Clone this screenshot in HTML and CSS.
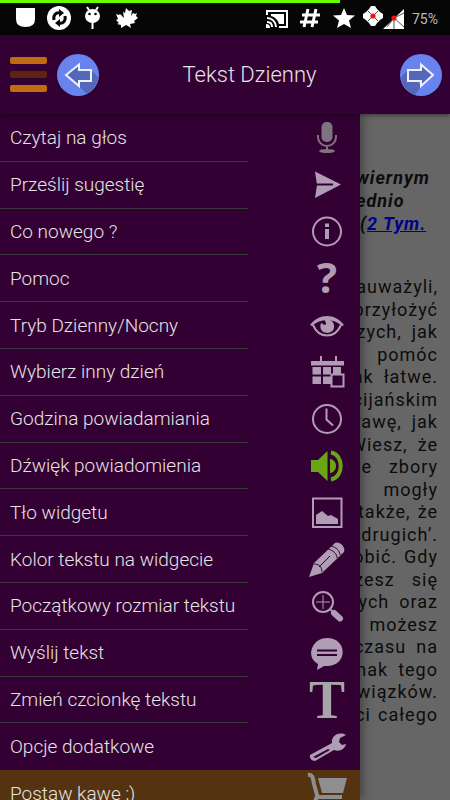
FILE: index.html
```html
<!DOCTYPE html>
<html lang="pl">
<head>
<meta charset="utf-8">
<meta name="viewport" content="width=device-width, initial-scale=1">
<title>Tekst Dzienny</title>
<link rel="stylesheet" href="styles.css">
</head>
<body>
<div class="app">
  <div class="status">
    <div class="battery-line"></div>
    <div class="status-group">
      <svg width="20" height="24" viewBox="0 0 20 24"><path d="M0 1h19v11q0 8-9.500 8T0 12z"/></svg>
      <svg width="24" height="24" viewBox="0 0 24 24"><circle cx="11" cy="11" r="12"/><path class="line-dark" d="M6 13c-1-5 2-8 6-7M17 9c1 5-2 8-6 7"/><path class="ink-dark" d="M11 2l5 4-5 4zM12 12l-5 4 5 4z"/></svg>
      <svg width="16" height="24" viewBox="0 0 16 24"><path class="line-white" d="M3 0l2 3M14 0l-2 3M8.500 15v7"/><ellipse cx="8.500" cy="9" rx="7.500" ry="7"/><circle class="ink-dark" cx="5.500" cy="7" r="1.300"/><circle class="ink-dark" cx="11.500" cy="7" r="1.300"/></svg>
      <svg width="28" height="24" viewBox="0 0 28 24"><path d="M14 1l3 3 3-1-1 6 2-3 2 1 2-1-1 3 2 2-4 3 1 2-5 1 1 4-3-2-2-1-5 3v-3l-4-1 2-1-3-3 2-1-2-5 3 1 1-1 4 4-1-6 2 1z"/></svg>
    </div>
    <div class="status-group status-right">
      <svg width="26" height="24" viewBox="0 0 26 24"><path class="line-white" d="M1 8V4h20v16h-8M1 11c5 0 9 4 9 9M1 15c3 0 5 2 5 5"/><path d="M5 7h13v10h-5c-1-4-4-7-8-8zM0 17q4 0 4 4H0z"/></svg>
      <svg width="24" height="24" viewBox="0 0 24 24"><path class="line-hash" d="M8 2L4 20M16 2l-4 18M2 8h18M0 15h18"/></svg>
      <svg width="22" height="24" viewBox="0 0 22 24"><path d="M12 1l3 7 8 .600-6 5 2 7.400-7-4-7 4 2-7.400-6-5L9 8z"/></svg>
      <svg width="42" height="24" viewBox="0 0 42 24"><path d="M9 -1h4l2 3 3 3 3 2v4l-3 2-3 3-2 3H9l-2-3-3-3-3-2V7l3-2 3-3zM42 2v20H21z"/><path class="line-thin" d="M6 4l10 10M16 4L6 14M32 11L42 6M32 11l10 9M32 11v11M32 11l-7 9"/><circle class="ink-red" cx="11" cy="9" r="2.600"/><circle class="ink-red" cx="32" cy="11" r="2.600"/></svg>
      <span class="percent">75%</span>
    </div>
  </div>

  <header class="bar">
    <button class="burger" aria-label="Menu"><span></span><span></span><span></span></button>
    <button class="round" aria-label="Poprzedni"><svg width="42" height="42" viewBox="0 0 42 42"><circle class="disc" cx="21" cy="21" r="21"/><path class="disc-shade" d="M34 16l7 7a21 21 0 0 1-11 17L21 31z"/><path class="arrow" d="M9 21L22 10.500V16h12v11H22v5z"/></svg></button>
    <h1>Tekst Dzienny</h1>
    <button class="round" aria-label="Następny"><svg width="42" height="42" viewBox="0 0 42 42"><circle class="disc" cx="21" cy="21" r="21"/><path class="disc-shade" d="M8 16l-7 7a21 21 0 0 0 14 18l6-9z"/><path class="arrow" d="M33 21L21 10.500V16H8v11h13v5z"/></svg></button>
  </header>

  <div class="body">
    <nav class="drawer">
      <ul>
        <li><a href="#"><span class="label">Czytaj na głos</span><svg viewBox="0 0 40 40"><g class="mic"><rect x="14.500" y="4" width="11" height="20" rx="5"/><path class="mic-line" d="M11 17v2c0 5 4 9 9 9s9-4 9-9v-2M20 28v5"/><ellipse cx="20" cy="33" rx="8" ry="2"/></g></svg></a></li>
        <li><a href="#"><span class="label">Prześlij sugestię</span><svg viewBox="0 0 40 40"><path d="M8 6.500L34 19.500 8 33l2-13z"/><path class="cut" d="M9 19.500h17"/></svg></a></li>
        <li><a href="#"><span class="label">Co nowego ?</span><svg viewBox="0 0 40 40"><circle class="line" cx="20" cy="19.500" r="14"/><path d="M18 17h4v10h-4zM18 11.500h4v3.500h-4z"/></svg></a></li>
        <li><a href="#"><span class="label">Pomoc</span><svg viewBox="0 0 40 40"><text class="question" x="20" y="34" text-anchor="middle">?</text></svg></a></li>
        <li><a href="#"><span class="label">Tryb Dzienny/Nocny</span><svg viewBox="0 0 40 40"><path d="M3 19C12 7 28 7 37 19l-2 1C27 12 13 12 5 20z"/><path class="line" d="M6 19c6 14 22 14 28 0"/><path d="M14 17c2 1 4 3 5 1s-2-2-1-4c10-3 13 12 3 13-6 0-9-4-7-10z"/></svg></a></li>
        <li><a href="#"><span class="label">Wybierz inny dzień</span><svg viewBox="0 0 40 40"><path d="M4 9h9V4h2v5h13V4h2v5h7v4.500H4zM5.500 15H14v7.500H5.500zM16 15h8v7.500h-8zM26 15h8v7.500h-8zM5.500 24.500H14V32H5.500zM16 24.500h8V32h-8z"/><path class="box" d="M24.500 22.500h12v12h-12z"/></svg></a></li>
        <li><a href="#"><span class="label">Godzina powiadamiania</span><svg viewBox="0 0 40 40"><circle class="line" cx="20" cy="20" r="14"/><path class="line" d="M19.500 9.500v11l6.500 6"/></svg></a></li>
        <li><a href="#"><span class="label">Dźwięk powiadomienia</span><svg viewBox="0 0 40 40"><g class="sound"><path d="M4 14h7l9.500-9v30L11 26H4zM23 13c8 1 8 13 0 14z"/><path class="wave" d="M24 6.500c13 2 13 25 0 27"/></g></svg></a></li>
        <li><a href="#"><span class="label">Tło widgetu</span><svg viewBox="0 0 40 40"><path class="line" d="M6 5.500h28.500v28.500H6z"/><path d="M9 31v-9l6-4 6 5 3-1 7 4v5z"/></svg></a></li>
        <li><a href="#"><span class="label">Kolor tekstu na widgecie</span><svg viewBox="0 0 40 40"><path d="M2 37l5-14L28 3c4-2 11 4 9 9L15 33z"/><path class="cut thin" d="M7 24c5 0 8 3 8 8M21 9c5 1 9 5 9 9M24 6c5 1 9 5 9 9M12 27L23 16"/></svg></a></li>
        <li><a href="#"><span class="label">Początkowy rozmiar tekstu</span><svg viewBox="0 0 40 40"><circle class="line" cx="16" cy="16" r="10"/><path class="thin" d="M16 9v14M9 16h14"/><path class="line" d="M23 23l4 4"/><path class="handle" d="M27 27l6 5.500"/></svg></a></li>
        <li><a href="#"><span class="label">Wyślij tekst</span><svg viewBox="0 0 40 40"><path d="M20 5c21 0 21 28 0 28h-3l-7 4 1-6C-2 24 5 5 20 5z"/><path class="cut" d="M10 17.500h20M10 22h20"/></svg></a></li>
        <li><a href="#"><span class="label">Zmień czcionkę tekstu</span><svg viewBox="0 0 40 40"><text class="letter" x="20" y="38" text-anchor="middle">T</text></svg></a></li>
        <li><a href="#"><span class="label">Opcje dodatkowe</span><svg viewBox="0 0 40 40"><path d="M3 28l22-12c-1-5 4-11 12-9l2 1-6 3-1 4 3 3 4-1c-1 5-6 8-12 6L8 34c-3 0-6-3-5-6z"/><path class="slot" d="M6 30l15-8 2 1-14 8z"/></svg></a></li>
        <li class="coffee"><a href="#"><span class="label">Postaw kawę ;)</span><svg viewBox="0 0 40 40"><g class="cart"><path d="M11 4h29l-4 15H15z"/><path class="cart-line" d="M1 1c5-1 5 4 6 9l3 11c1 3 3 2 6 2h19M10 23c-3 4 0 5 4 5h21"/><circle cx="14" cy="33" r="3"/><circle cx="32" cy="33" r="3"/></g></svg></a></li>
      </ul>
    </nav>

    <main class="page">
      <blockquote>
        <p class="clipped">wiernym</p>
        <p class="clipped">ednio</p>
        <p>(<a href="#">2 Tym.</a></p>
      </blockquote>
      <div class="lines">
        <p><span>auważyli,</span></p>
        <p><span>przyłożyć</span></p>
        <p><span>zych,</span><span>jak</span></p>
        <p><span>pomóc</span></p>
        <p><span>ak</span><span>łatwe.</span></p>
        <p><span>cijańskim</span></p>
        <p><span>rawę,</span><span>jak</span></p>
        <p><span>Wiesz,</span><span>że</span></p>
        <p class="wide"><span>ce</span><span>zbory</span></p>
        <p><span>mogły</span></p>
        <p class="tight"><span>także,</span><span>że</span></p>
        <p><span>drugich’.</span></p>
        <p class="tight"><span>obić.</span><span>Gdy</span></p>
        <p class="wide"><span>żesz</span><span>się</span></p>
        <p><span>ych</span><span>oraz</span></p>
        <p><span>możesz</span></p>
        <p><span>czasu</span><span>na</span></p>
        <p><span>nak</span><span>tego</span></p>
        <p><span>wiązków.</span></p>
        <p class="tight"><span>ci</span><span>całego</span></p>
      </div>
    </main>
  </div>
</div>
</body>
</html>
```
FILE: styles.css
```css
* { box-sizing: border-box; }

body {
  margin: 0;
  background: #666;
  font-family: Roboto, "Noto Sans", sans-serif;
}

p, h1, ul, blockquote { margin: 0; padding: 0; }

.app {
  display: flex;
  flex-direction: column;
  height: 100vh;
  overflow: hidden;
}

/* Status bar */
.status {
  position: relative;
  display: flex;
  justify-content: space-between;
  align-items: center;
  height: 35px;
  flex: none;
  padding: 2px 12px 0 16px;
  background: #060606;
  color: #bbb;
}
.battery-line {
  position: absolute;
  top: 0;
  left: 0;
  width: 75.5%;
  height: 3px;
  background: #6f0;
}
.status-group { display: flex; align-items: center; gap: 12px; }
.status-right { gap: 8px; }
.status svg { fill: #fff; overflow: visible; }
.percent { font-size: 14px; }
.status .ink-dark { fill: #060606; }
.status .ink-red { fill: #f01010; }
.line-white { fill: none; stroke: #fff; stroke-width: 2; }
.line-dark { fill: none; stroke: #060606; stroke-width: 3; }
.line-hash { fill: none; stroke: #fff; stroke-width: 3; }
.line-thin { fill: none; stroke: #555; stroke-width: 1; }

/* Title bar */
.bar {
  position: relative;
  z-index: 2;
  display: flex;
  align-items: center;
  flex: none;
  height: 79px;
  padding: 0 8px 0 10px;
  background: #330033;
  box-shadow: 0 1px 5px rgba(0, 0, 0, 0.5);
}
.bar h1 {
  flex: 1;
  text-align: center;
  font-size: 22px;
  font-weight: 300;
  color: #e4e4e4;
}
button { border: 0; padding: 0; background: none; }
.burger {
  display: flex;
  flex-direction: column;
  gap: 7px;
  width: 37px;
  margin-right: 10px;
}
.burger span { height: 7px; border-radius: 2px; background: #c06c10; }
.burger span:nth-child(2) { background: #5c260e; }
.round { width: 42px; height: 42px; }
.round svg { display: block; }
.disc { fill: #6883ee; }
.disc-shade { fill: #5468bb; }
.arrow { fill: #5468bb; stroke: #f0f0fa; stroke-width: 2; }

/* Content under the bar */
.body { display: flex; flex: 1; min-height: 0; }

.drawer {
  position: relative;
  z-index: 1;
  flex: none;
  width: 80%;
  padding-top: 1px;
  background: #330033;
  box-shadow: 2px 0 10px rgba(0, 0, 0, 0.4);
}
.drawer ul {
  display: grid;
  grid-template-rows: repeat(15, 1fr);
  height: 702px;
  list-style: none;
}
.drawer a {
  display: flex;
  align-items: center;
  height: 100%;
  padding-right: 13px;
  color: #e4e4e4;
  text-decoration: none;
}
.label {
  display: flex;
  align-items: center;
  width: 248px;
  height: 100%;
  padding-left: 10px;
  border-bottom: 1px solid #38383a;
  font-size: 19px;
  font-weight: 300;
  white-space: nowrap;
}
.drawer li:nth-last-child(-n+2) .label { border-color: transparent; }
.drawer svg {
  width: 40px;
  height: 40px;
  margin-left: auto;
  overflow: visible;
  fill: #b09cb4;
}
.coffee { background: #553311; }

.line, .thin, .handle, .cut { fill: none; stroke: #b09cb4; stroke-width: 2; }
.thin { stroke-width: 1; }
.handle { stroke-width: 6; stroke-linecap: round; }
.cut { stroke: #330033; }
.slot { fill: #330033; }
.box { fill: #330033; stroke: #b09cb4; stroke-width: 2; }
.mic { fill: #7c747e; }
.mic-line { fill: none; stroke: #7c747e; stroke-width: 2; }
.sound { fill: #6aa614; }
.wave { fill: none; stroke: #6aa614; stroke-width: 4; }
.question { font: bold 42px "Open Sans", sans-serif; }
.letter { font: bold 54px "Liberation Serif", serif; fill: #a6a6a6; }
.cart { fill: #8e8e8e; }
.cart-line { fill: none; stroke: #8e8e8e; stroke-width: 4; }

/* Daily text */
.page {
  flex: 1;
  min-width: 0;
  padding-top: 52px;
  overflow: hidden;
  background: #666;
  color: #0c0c0c;
  font-size: 18px;
  letter-spacing: 1px;
}
blockquote {
  height: 110px;
  font-weight: 700;
  font-style: italic;
  line-height: 23px;
}
blockquote a { color: #00008c; }
.clipped { margin-left: -4px; }
.lines {
  display: grid;
  grid-template-columns: minmax(0, 1fr);
  grid-template-rows: repeat(20, 1fr);
  height: 450px;
  padding-right: 12px;
}
.lines p {
  display: flex;
  align-items: center;
  justify-content: flex-end;
  gap: 10px;
  line-height: 22px;
}
.lines .wide { gap: 17px; }
.lines .tight { gap: 7px; }
```
